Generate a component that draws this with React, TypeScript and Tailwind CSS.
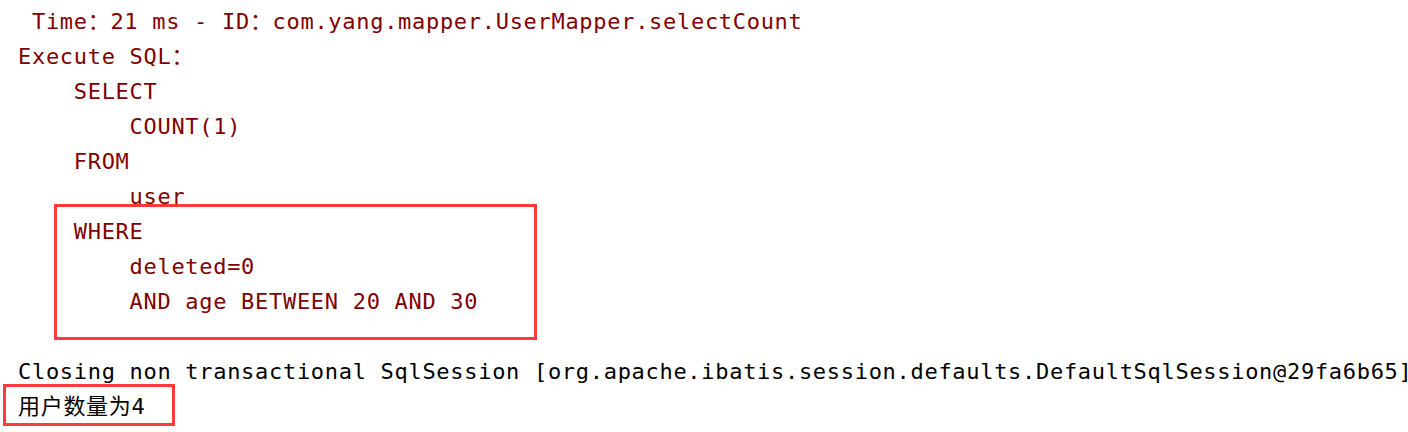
const lines: { text: string; color: string }[] = [
  { text: " Time：21 ms - ID：com.yang.mapper.UserMapper.selectCount", color: "red" },
  { text: "Execute SQL：", color: "red" },
  { text: "    SELECT", color: "red" },
  { text: "        COUNT(1)", color: "red" },
  { text: "    FROM", color: "red" },
  { text: "        user", color: "red" },
  { text: "    WHERE", color: "red" },
  { text: "        deleted=0", color: "red" },
  { text: "        AND age BETWEEN 20 AND 30", color: "red" },
  { text: " ", color: "red" },
  {
    text: "Closing non transactional SqlSession [org.apache.ibatis.session.defaults.DefaultSqlSession@29fa6b65]",
    color: "black",
  },
  { text: "用户数量为4", color: "black" },
];

export default function App() {
  return (
    <div className="relative w-[1408px] h-[432px] overflow-hidden bg-white">
      <div
        className="pt-[4px] pl-[18px] text-[22px] leading-[35px] tracking-[0.7px] whitespace-pre"
        style={{ fontFamily: '"DejaVu Sans Mono", "Noto Sans CJK SC", monospace' }}
      >
        {lines.map((line, i) => (
          <div
            key={i}
            className={line.color === "red" ? "text-[#7f0000]" : "text-black"}
          >
            {line.text}
          </div>
        ))}
      </div>

      {/* annotation boxes */}
      <div className="absolute left-[54px] top-[204px] w-[483px] h-[136px] border-[3px] border-[#ff3b3b]" />
      <div className="absolute left-[3px] top-[384px] w-[172px] h-[42px] border-[3px] border-[#ff3b3b]" />
    </div>
  );
}
